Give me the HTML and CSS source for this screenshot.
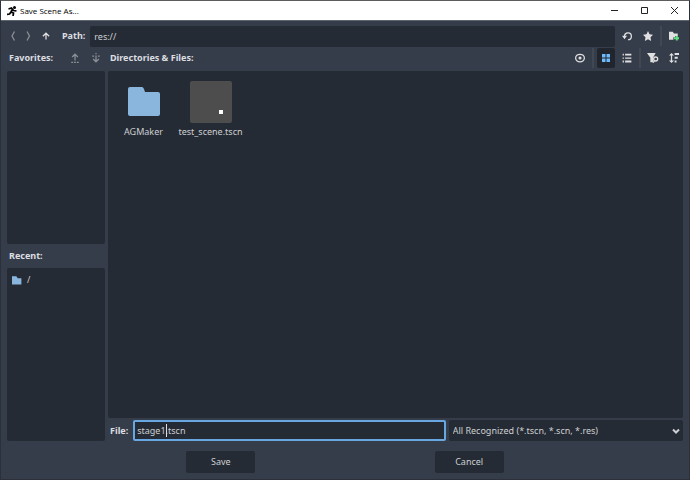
FILE: index.html
```html
<!DOCTYPE html>
<html lang="en">
<head>
	<meta charset="utf-8">
	<title>Save Scene As...</title>
	<meta name="viewport" content="width=device-width, initial-scale=1">
	<link rel="stylesheet" href="styles.css">
</head>
<body>
	<div class="window">
		<header class="titlebar">
			<svg class="app-icon" width="10" height="10" viewBox="0 0 20 20">
				<circle cx="15" cy="3" r="3"/>
				<path d="M3 6l6-2 4 5 6 1M11 6l-3 6 5 2-1 6M8 12l-3 4-5 1" fill="none" stroke="#000" stroke-width="3.500"/>
			</svg>
			<h1>Save Scene As...</h1>
			<button class="win-btn" aria-label="Minimize">
				<svg width="9" height="9" viewBox="0 0 9 9"><path d="M1 4.500h7"/></svg>
			</button>
			<button class="win-btn" aria-label="Maximize">
				<svg width="9" height="9" viewBox="0 0 9 9"><path d="M1.500 1.500h6v6h-6z"/></svg>
			</button>
			<button class="win-btn" aria-label="Close">
				<svg width="9" height="9" viewBox="0 0 9 9"><path d="M1 1l7 7M8 1l-7 7"/></svg>
			</button>
		</header>

		<main class="dialog">
			<div class="bar">
				<button class="tool narrow dim" aria-label="Back">
					<svg width="10" height="10" viewBox="0 0 10 10"><path class="line" d="M6.500 .5L4 5l2.500 4.500" stroke-width="1.300"/></svg>
				</button>
				<button class="tool narrow dim" aria-label="Forward">
					<svg width="10" height="10" viewBox="0 0 10 10"><path class="line" d="M4 .5L6.500 5 4 9.500" stroke-width="1.300"/></svg>
				</button>
				<button class="tool" aria-label="Up">
					<svg width="10" height="10" viewBox="0 0 16 16"><path class="line thick" d="M8 13.500V4M3 8.500l5-5 5 5"/></svg>
				</button>
				<label class="label path-label" for="path">Path:</label>
				<input class="field path" id="path" type="text" value="res://">
				<button class="tool" aria-label="Refresh">
					<svg width="10" height="10" viewBox="0 0 16 16"><path class="line thick" d="M4 8a5.500 5.500 0 1 1 5.500 6"/><path d="M0 7.500h8L4 13z"/></svg>
				</button>
				<button class="tool" aria-label="Favorite">
					<svg width="10" height="10" viewBox="0 0 16 16"><path d="M8 0l2.400 5.200 5.600.8-4 4 1 6-5-2.800L3 16l1-6-4-4 5.600-.8z"/></svg>
				</button>
				<span class="sep"></span>
				<button class="tool" aria-label="New folder">
					<svg width="10" height="10" viewBox="0 0 16 16"><path d="M0 1h6l2 3h6v4h-4v2H7v4H0z"/><path class="green" d="M11 8h3v2h2v3h-2v2h-3v-2H8v-3h3z"/></svg>
				</button>
			</div>

			<div class="split">
				<aside class="side">
					<div class="bar">
						<h2 class="label grow">Favorites:</h2>
						<button class="tool dim" aria-label="Move up">
							<svg width="10" height="10" viewBox="0 0 16 16"><path class="line thick" d="M8 12V2M3.500 6.500L8 2l4.500 4.500M2 15h3M11 15h3M6.500 15h3"/></svg>
						</button>
						<button class="tool dim" aria-label="Move down">
							<svg width="10" height="10" viewBox="0 0 16 16"><path class="line thick" d="M8 4v10M3.500 9.500L8 14l4.500-4.500M2 5h3M11 5h3M8 0v2"/></svg>
						</button>
					</div>
					<div class="panel"></div>
					<h2 class="label recent">Recent:</h2>
					<ul class="panel">
						<li class="recent-item">
							<svg width="10" height="10" viewBox="0 0 16 16"><path class="folder" d="M0 2h7l2 3h6v10H0z"/></svg>
							<span>/</span>
						</li>
					</ul>
				</aside>

				<section class="content">
					<div class="bar">
						<h2 class="label grow">Directories &amp; Files:</h2>
						<button class="tool" aria-label="Toggle hidden files">
							<svg width="10" height="10" viewBox="0 0 16 16"><ellipse class="line thick" cx="8" cy="8" rx="7" ry="6"/><circle cx="8" cy="8" r="2.500"/></svg>
						</button>
						<span class="sep"></span>
						<button class="tool active" aria-label="Thumbnails" aria-pressed="true">
							<svg width="10" height="10" viewBox="0 0 10 10"><path class="blue" d="M1 1h3.500v3.500H1zM5.500 1H9v3.500H5.500zM1 5.500h3.500V9H1zM5.500 5.500H9V9H5.500z"/></svg>
						</button>
						<button class="tool" aria-label="List">
							<svg width="10" height="10" viewBox="0 0 16 16"><path d="M1 1h2v3H1zM5 1h10v3H5zM1 7h2v2H1zM5 7h10v2H5zM1 12h2v3H1zM5 12h10v3H5z"/></svg>
						</button>
						<span class="sep"></span>
						<button class="tool" aria-label="Filter">
							<svg width="12" height="10" viewBox="0 0 18 15"><path d="M0 0h13L9 7v7H5V7z"/><circle class="line thick" cx="13" cy="9" r="3"/><path class="line thick" d="M11 12l-2 2.500"/></svg>
						</button>
						<button class="tool" aria-label="Sort">
							<svg width="10" height="10" viewBox="0 0 16 16"><path d="M4 0l4 4H5v8h3l-4 4-4-4h3V4H0z"/><path d="M9 0h7v3H9zM9 6h5v3H9zM9 12h3v3H9z"/></svg>
						</button>
					</div>
					<ul class="panel files">
						<li>
							<span class="thumb">
								<svg width="42" height="42" viewBox="0 0 42 42"><path class="folder" d="M7 6h12q1 0 2 2l1 3h13q2 0 2 2v20q0 2-2 2H7q-2 0-2-2V8q0-2 2-2z"/></svg>
							</span>
							<span>AGMaker</span>
						</li>
						<li>
							<span class="thumb preview">
								<svg width="42" height="42" viewBox="0 0 42 42"><path fill="#fff" d="M29 29h4v4h-4z"/></svg>
							</span>
							<span>test_scene.tscn</span>
						</li>
					</ul>
					<div class="bar file-row">
						<label class="label" for="file">File:</label>
						<div class="name">
							<input class="field focused" id="file" type="text" value="stage1.tscn">
							<span class="caret"></span>
						</div>
						<div class="filter">
							<select class="field" aria-label="File type">
								<option>All Recognized (*.tscn, *.scn, *.res)</option>
							</select>
							<svg class="chevron" width="8" height="6" viewBox="0 0 8 6"><path class="line" d="M1 1.500l3 3 3-3"/></svg>
						</div>
					</div>
				</section>
			</div>

			<footer class="actions">
				<button class="action">Save</button>
				<button class="action">Cancel</button>
			</footer>
		</main>
	</div>
</body>
</html>
```

FILE: styles.css
```css
* {
  box-sizing: border-box;
}
body {
  margin: 0;
  background: #363d4a;
  color: #cdcfd2;
  font: 9px/14px "Noto Sans", sans-serif;
}
h1, h2, ul {
  margin: 0;
  padding: 0;
  list-style: none;
}
button, input, select {
  margin: 0;
  padding: 0;
  border: 0;
  background: none;
  color: inherit;
  font: inherit;
}
svg {
  display: block;
  fill: currentColor;
}

.window {
  display: flex;
  flex-direction: column;
  min-height: 100vh;
  border: 1px solid #2b303a;
  border-top-color: #5c5c5c;
}
.titlebar {
  display: flex;
  align-items: center;
  height: 20px;
  padding-left: 6px;
  border-bottom: 1px solid #5f666e;
  background: #fff;
  color: #000;
}
.titlebar h1 {
  flex: 1;
  margin-left: 3px;
  font: 8px/14px "Open Sans", sans-serif;
}
.win-btn {
  display: flex;
  align-items: center;
  justify-content: center;
  width: 30px;
  height: 18px;
}
.win-btn path {
  fill: none;
  stroke: #222;
}

.dialog {
  flex: 1;
  display: flex;
  flex-direction: column;
  padding: 5px 6px 6px;
}
.bar {
  display: flex;
  align-items: center;
  gap: 3px;
  height: 20px;
}
.label {
  padding: 0 2px;
  font-size: 9px;
  font-weight: 700;
  color: #dcdee1;
}
.path-label {
  margin-left: 2px;
}
.grow {
  flex: 1;
}
.tool {
  display: flex;
  align-items: center;
  justify-content: center;
  width: 18px;
  height: 20px;
  border-radius: 2px;
  color: #e0e0e0;
}
.narrow {
  width: 12px;
}
.dim {
  color: #8b9098;
}
.active {
  background: #21262e;
}
.sep {
  width: 2px;
  height: 20px;
  background: #414854;
}
.line {
  fill: none;
  stroke: currentColor;
}
.thick {
  stroke-width: 2;
}
.green {
  fill: #5fe080;
}
.blue {
  fill: #70bafa;
}
.folder {
  fill: #8ab6de;
}

.field {
  width: 100%;
  height: 21px;
  padding: 0 4px;
  border-radius: 2px;
  background: #252b34;
}
.path {
  flex: 1;
  min-width: 0;
}

.split {
  flex: 1;
  display: grid;
  grid-template-columns: 98px 1fr;
  gap: 3px;
  margin-top: 2px;
}
.side, .content {
  display: flex;
  flex-direction: column;
}
.panel {
  flex: 1;
  border-radius: 2px;
  background: #252b34;
}
.side .bar, .content .bar {
  margin-bottom: 3px;
}
.recent {
  line-height: 24px;
}
.recent-item {
  display: flex;
  align-items: center;
  gap: 5px;
  padding: 5px;
}
.files {
  display: grid;
  grid-template-columns: repeat(auto-fill, 67px);
  align-content: start;
  padding: 10px 2px;
}
.files li {
  display: flex;
  flex-direction: column;
  align-items: center;
  gap: 2px;
}
.preview {
  border-radius: 2px;
  background: #4d4d4d;
}

.content .file-row {
  height: 21px;
  margin: 2px 0 0;
}
.name {
  position: relative;
  flex: 4 1 0;
}
.name .field, .filter .field {
  display: block;
}
.focused {
  padding: 0 2px;
  border: 2px solid #68a7e2;
}
.caret {
  position: absolute;
  top: 4px;
  left: 33px;
  width: 1px;
  height: 13px;
  background: #dcdee1;
}
.filter {
  position: relative;
  flex: 3 1 0;
}
.filter select {
  appearance: none;
}
.chevron {
  position: absolute;
  top: 8px;
  right: 3px;
  pointer-events: none;
}
.chevron path {
  stroke-width: 2;
}

.actions {
  display: flex;
  justify-content: space-evenly;
  margin-top: 10px;
}
.action {
  width: 69px;
  height: 22px;
  border-radius: 2px;
  background: #252b34;
}
```
